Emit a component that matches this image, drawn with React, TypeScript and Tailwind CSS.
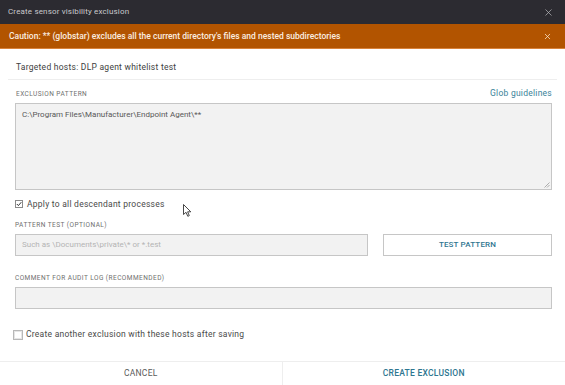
import { X } from "lucide-react";

const font = { fontFamily: "Roboto, 'Liberation Sans', sans-serif" };

function Label({ children }: { children: string }) {
  return (
    <p className="text-[6.5px] tracking-[0.07em] text-[#6f6f6f] uppercase leading-none">{children}</p>
  );
}

export default function App() {
  return (
    <div className="w-[565px] h-[385px] bg-white flex flex-col overflow-hidden relative" style={font}>
      <div className="h-[24px] bg-[#2c2b31] flex items-center justify-between pl-[8px] pr-[11px]">
        <span className="text-[8px] tracking-[0.02em] text-[#c9c9cc]">Create sensor visibility exclusion</span>
        <X className="size-[11px] text-[#bdbdc0]" strokeWidth={1.5} />
      </div>
      <div className="h-[25px] bg-[#b25400] flex items-center justify-between pl-[9px] pr-[13px] border-b border-[#d8823a]">
        <span className="text-[8.5px] font-medium text-[#fbeee0]">
          Caution: ** (globstar) excludes all the current directory's files and nested subdirectories
        </span>
        <X className="size-[9px] text-[#fbe5cc]" strokeWidth={2} />
      </div>

      <div className="flex-1 flex flex-col">
        <div className="mx-[8px] h-[31px] flex items-center pl-[8px] pt-[6px] border-b border-[#eeeeee]">
          <span className="text-[8.5px] tracking-[0.03em] text-[#3e3e3e]">Targeted hosts: DLP agent whitelist test</span>
        </div>

        <div className="pl-[15px] pr-[13px] pt-[9px]">
          <div className="flex items-end justify-between pb-[5px] pl-px">
            <Label>Exclusion pattern</Label>
            <a className="text-[8.5px] tracking-[0.03em] text-[#3a8299] leading-none">Glob guidelines</a>
          </div>
          <div className="relative h-[87px] bg-[#f2f2f2] border border-[#c6c6c6] px-[6px] pt-[5px]">
            <p className="text-[8px] leading-[12px] text-[#585858]">C:\Program Files\Manufacturer\Endpoint Agent\**</p>
            <svg className="absolute right-[1px] bottom-[1px]" width="6" height="6" viewBox="0 0 6 6">
              <path d="M5.5 0.5 L0.5 5.5 M5.5 3 L3 5.5" stroke="#9a9a9a" strokeWidth="0.8" />
            </svg>
          </div>

          <label className="flex items-center gap-[4px] mt-[8px]">
            <span className="size-[8px] border border-[#8a8a8a] bg-white flex items-center justify-center">
              <svg width="6" height="6" viewBox="0 0 6 6">
                <path d="M0.8 3 L2.4 4.6 L5.3 1.2" stroke="#333" strokeWidth="1" fill="none" />
              </svg>
            </span>
            <span className="text-[8.5px] tracking-[0.03em] text-[#4a4a4a]">Apply to all descendant processes</span>
          </label>

          <div className="mt-[12px]">
            <Label>Pattern test (optional)</Label>
            <div className="flex gap-[15px] mt-[5px]">
              <div className="flex-1 h-[22px] bg-[#f2f2f2] border border-[#c6c6c6] flex items-center px-[6px]">
                <span className="text-[8px] text-[#b4b4b4]">Such as \Documents\private\* or *.test</span>
              </div>
              <button className="w-[169px] h-[22px] bg-white border border-[#c6c6c6] text-[8px] font-medium tracking-[0.02em] text-[#2e7690]">
                TEST PATTERN
              </button>
            </div>
          </div>

          <div className="mt-[19px]">
            <Label>Comment for audit log (recommended)</Label>
            <div className="h-[22px] mt-[6px] bg-[#f2f2f2] border border-[#c6c6c6]" />
          </div>

          <label className="flex items-center gap-[3px] mt-[19px] ml-[-2px]">
            <span className="size-[10px] border border-[#b8b8b8] bg-[#e6e6e6] p-px">
              <span className="block size-full bg-white" />
            </span>
            <span className="text-[8.5px] tracking-[0.03em] text-[#4a4a4a]">Create another exclusion with these hosts after saving</span>
          </label>
        </div>
      </div>

      <div className="h-[24px] border-t border-[#eeeeee] grid grid-cols-2">
        <button className="border-r border-[#eeeeee] text-[8.5px] tracking-[0.03em] text-[#5a5a5a]">CANCEL</button>
        <button className="text-[8.5px] font-medium tracking-[0.03em] text-[#2e7690]">CREATE EXCLUSION</button>
      </div>

      <svg className="absolute left-[183px] top-[204px]" width="9" height="14" viewBox="0 0 9 14">
        <path d="M0.5 0.5 L0.5 10.5 L3 8.3 L4.8 12.3 L6.3 11.6 L4.6 7.8 L7.8 7.8 Z" fill="white" stroke="#333" strokeWidth="0.9" strokeLinejoin="round" />
      </svg>
    </div>
  );
}
